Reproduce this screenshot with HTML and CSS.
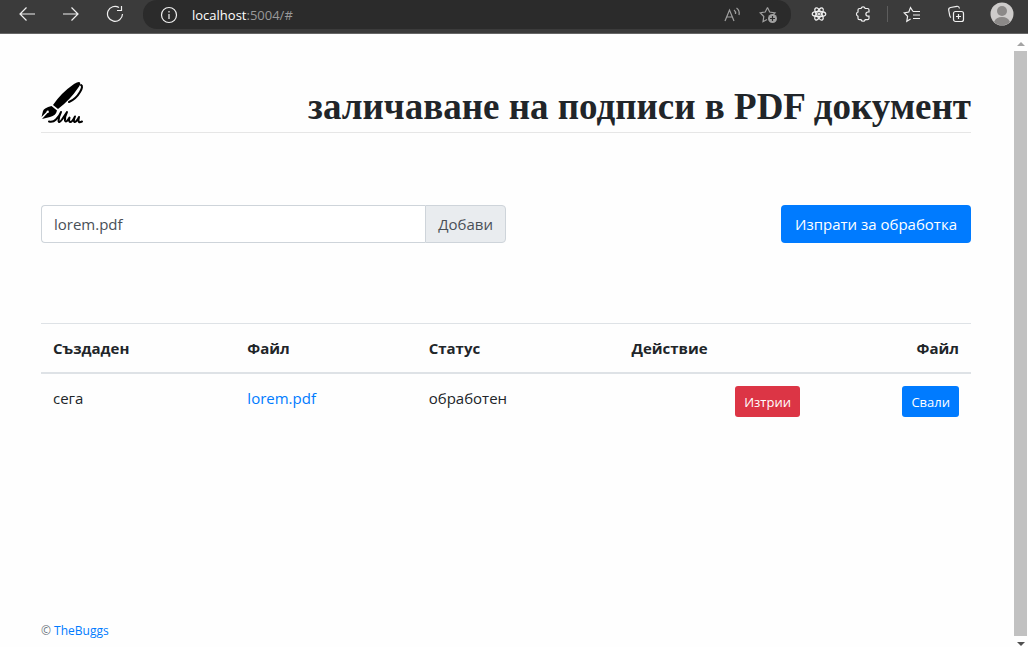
FILE: index.html
```html
<!DOCTYPE html>
<html lang="bg">
<head>
<meta charset="utf-8">
<meta name="viewport" content="width=device-width, initial-scale=1">
<title>Заличаване на подписи в PDF документ</title>
<link rel="stylesheet" href="styles.css">
</head>
<body>
<header class="browser">
  <nav class="nav-buttons">
    <button class="tool" aria-label="Назад"><svg width="18" height="16" viewBox="0 0 18 16"><path d="M17 8H2M8.500 1.500 2 8l6.500 6.500"/></svg></button>
    <button class="tool" aria-label="Напред"><svg width="18" height="16" viewBox="0 0 18 16"><path d="M1 8h15M9.500 1.500 16 8l-6.500 6.500"/></svg></button>
    <button class="tool" aria-label="Презареди"><svg width="18" height="18" viewBox="0 0 18 18"><path d="M13 2.500A7.500 7.500 0 1 0 16.500 9M15.500 1v4.500H11"/></svg></button>
  </nav>
  <div class="address">
    <svg class="info" width="18" height="18" viewBox="0 0 18 18"><circle cx="9" cy="9" r="7.500"/><path d="M9 8v5M9 5v1.500"/></svg>
    <span class="url"><span class="host">localhost</span>:5004/#</span>
    <button class="tool dim" aria-label="Четене на глас"><svg width="18" height="16" viewBox="0 0 18 16"><path d="M1 14 5.500 3 10 14M2.600 10h5.800M10 3q2 1.500 1.500 4M12.500 1q3.500 2.500 2.500 7"/></svg></button>
    <button class="tool dim" aria-label="Добави в предпочитани"><svg width="20" height="18" viewBox="0 0 20 18"><path d="m8.500 1.500 2.200 4.500 5.300.8-2 2M8.500 1.500 6.200 6l-5 .8 3.600 3.700-.8 5.200 4-2.200"/><circle cx="13.500" cy="12.500" r="4.500" fill="#a0a0a0" stroke="none"/><path d="M13.500 10v5M11 12.500h5" stroke="#2b2b2b"/></svg></button>
  </div>
  <div class="extensions">
    <button class="tool" aria-label="React"><svg width="16" height="16" viewBox="0 0 16 16"><circle cx="8" cy="8" r="1"/><ellipse cx="8" cy="8" rx="6.800" ry="2.600"/><ellipse cx="8" cy="8" rx="6.800" ry="2.600" transform="rotate(60 8 8)"/><ellipse cx="8" cy="8" rx="6.800" ry="2.600" transform="rotate(120 8 8)"/></svg></button>
    <button class="tool" aria-label="Разширения"><svg width="18" height="18" viewBox="0 0 18 18"><path d="M5.500 3.500H7a2.200 2.200 0 0 1 4.200 0H13.500q1.500 0 1.500 1.500v2h-1a2 2 0 0 0 0 4.200h1v2q0 1.500-1.500 1.500H11.200a2.200 2.200 0 0 1-4.200 0H5.500Q4 14.700 4 13.200v-2a2.200 2.200 0 0 1 0-4.200V5q0-1.500 1.500-1.500Z"/></svg></button>
    <span class="divider"></span>
    <button class="tool" aria-label="Предпочитани"><svg width="18" height="17" viewBox="0 0 18 17"><path d="m10 5.500-2.500-4L5.800 6l-4.600.8 3.400 3.500-.8 5 3.800-2.200M10 5.500h7M10 9h7M10 12.500h7"/></svg></button>
    <button class="tool" aria-label="Колекции"><svg width="18" height="18" viewBox="0 0 18 18"><rect x="6.500" y="6.500" width="10" height="10" rx="2"/><path d="M11.500 9v5M9 11.500h5M4 12.500q-1-.5-1.300-2l-1-5.500Q1.400 3 3.500 2.500L10 1.300q2-.3 2.500 2.200"/></svg></button>
    <button class="tool" aria-label="Профил"><svg width="24" height="24" viewBox="0 0 24 24"><circle cx="12" cy="12" r="11.500" fill="#cecccb" stroke="none"/><circle cx="12" cy="9" r="5" fill="#8b8988" stroke="none"/><path d="M4 20q2-5 8-5t8 5a11.500 11.500 0 0 1-16 0" fill="#8b8988" stroke="none"/></svg></button>
  </div>
</header>
<div class="viewport">
  <div class="page">
    <header class="masthead">
      <svg class="logo" width="44" height="44" viewBox="0 0 44 44">
        <path d="M12 24Q20 12 33 3q5-3 6-1.500t-2 5.500Q29 19 17 28Z"/>
        <path d="M10.500 25 16 29.500q-1 5-7 6.500l-8 2 5.500-6a1.200 1.200 0 1 0-1-1l-5 5 1.500-6q1-3 8.500-5Z"/>
        <path class="ink" d="M40 4q2.500 1-1 7-4 7-11 10"/>
        <path class="ink" d="M8 40.500q4 1 7-2 3.500-3.500 5-7.500-2.500 5-2.500 9 .5 2.500 3.500-1.500l5-7.500q-2.500 5-2 8.500 1 3 4.500-3-1 4 .5 4.500 2 .5 5-5.500-2 5-.5 5.500 2 0 4.500-5-1 4 0 5 1 .500 3-.5"/>
      </svg>
      <h1 class="title">заличаване на подписи в PDF документ</h1>
    </header>
    <main>
      <form class="upload">
        <div class="file-group">
          <input class="file-name" type="text" value="lorem.pdf" aria-label="Файл">
          <button class="browse" type="button">Добави</button>
        </div>
        <button class="btn" type="button">Изпрати за обработка</button>
      </form>
      <table class="files">
        <colgroup><col class="created"><col class="file"><col class="status"><col class="action"><col class="download"></colgroup>
        <thead>
          <tr><th>Създаден</th><th>Файл</th><th>Статус</th><th>Действие</th><th class="end">Файл</th></tr>
        </thead>
        <tbody>
          <tr><td>сега</td><td><a href="#">lorem.pdf</a></td><td>обработен</td><td class="end"><button class="btn small danger" type="button">Изтрии</button></td><td class="end"><button class="btn small" type="button">Свали</button></td></tr>
        </tbody>
      </table>
    </main>
    <footer class="footer">© <a href="#">TheBuggs</a></footer>
  </div>
  <div class="scrollbar" aria-hidden="true">
    <svg width="8" height="5" viewBox="0 0 8 5"><path d="M0 5 4 1l4 4Z" fill="#a3a3a3"/></svg>
    <span class="thumb"></span>
    <svg width="8" height="5" viewBox="0 0 8 5"><path d="m0 0 4 4 4-4Z" fill="#505050"/></svg>
  </div>
</div>
</body>
</html>
```
FILE: styles.css
```css
* { box-sizing: border-box; }
body {
  margin: 0;
  min-height: 100vh;
  display: flex;
  flex-direction: column;
  background: #fefefe;
  color: #212529;
  font: 15px/24px "Open Sans", "Noto Sans", sans-serif;
}
button, input { font: inherit; margin: 0; }
a { color: #007bff; text-decoration: none; }

.browser {
  display: flex;
  align-items: flex-start;
  height: 34px;
  background: #3b3b3b;
  border-bottom: 1px solid #666;
}
.nav-buttons { display: flex; gap: 26px; padding-left: 18px; }
.tool {
  display: flex;
  align-items: center;
  justify-content: center;
  height: 28px;
  padding: 0;
  border: 0;
  background: none;
}
.browser svg { fill: none; stroke: #f0f0f0; stroke-width: 1.2; }
.address {
  flex: 1;
  display: flex;
  align-items: center;
  height: 29px;
  margin-left: 19px;
  padding: 0 12px 0 17px;
  background: #2b2b2b;
  border-radius: 14px;
}
.url { flex: 1; padding-left: 14px; color: #999; font-size: 13px; line-height: 28px; }
.host { color: #fff; }
.address .dim { margin-left: 17px; }
.address .dim svg { stroke: #a0a0a0; }
.extensions { display: flex; align-items: center; padding: 0 14px 0 20px; }
.extensions .tool:nth-child(2) { margin-left: 27px; }
.divider { width: 1px; height: 16px; margin: 0 15px; background: #5d5d5d; }
.extensions .tool:nth-child(5) { margin-left: 26px; }
.extensions .tool:nth-child(6) { margin-left: 25px; }

.viewport { flex: 1; display: flex; }
.page {
  flex: 1;
  display: flex;
  flex-direction: column;
  padding: 47px 43px 4px 41px;
}
.masthead {
  display: flex;
  align-items: flex-start;
  justify-content: space-between;
  height: 52px;
  border-bottom: 1px solid #e6e6e6;
}
.logo { fill: #000; }
.ink { fill: none; stroke: #000; stroke-width: 2; stroke-linecap: round; stroke-linejoin: round; }
.title { margin: 0; font: bold 37px/52px "Liberation Serif", serif; white-space: nowrap; }
main { flex: 1; }
.upload { display: flex; justify-content: space-between; margin: 72px 0 80px; }
.file-group { display: flex; width: 50%; }
.file-name {
  flex: 1;
  min-width: 0;
  height: 38px;
  padding: 0 12px;
  border: 1px solid #ced4da;
  border-right: 0;
  border-radius: 4px 0 0 4px;
  background: #fff;
  color: #495057;
}
.browse {
  padding: 0 12px;
  border: 1px solid #ced4da;
  border-radius: 0 4px 4px 0;
  background: #e9ecef;
  color: #495057;
}
.btn {
  height: 38px;
  padding: 0 14px;
  border: 0;
  border-radius: 4px;
  background: #007bff;
  color: #fff;
}
.small { height: 31px; padding: 0 9px; border-radius: 3px; font-size: 13px; vertical-align: top; }
.danger { background: #dc3545; }

.files { width: 100%; border-collapse: collapse; table-layout: fixed; }
.files th, .files td { padding: 12px; text-align: left; vertical-align: top; border-top: 1px solid #dee2e6; }
.files thead th { border-bottom: 2px solid #dee2e6; }
.files .end { text-align: right; }
.created { width: 20.9%; }
.file { width: 19.5%; }
.status { width: 21.8%; }
.action { width: 20.7%; }
.download { width: 17.1%; }
.footer { color: #6c757d; font-size: 12px; line-height: 24px; }

.scrollbar {
  display: flex;
  flex-direction: column;
  align-items: center;
  width: 14px;
  padding: 7px 1px 0 0;
}
.thumb { flex: 1; width: 13px; margin: 5px 0 6px; background: #c1c1c1; }
```
